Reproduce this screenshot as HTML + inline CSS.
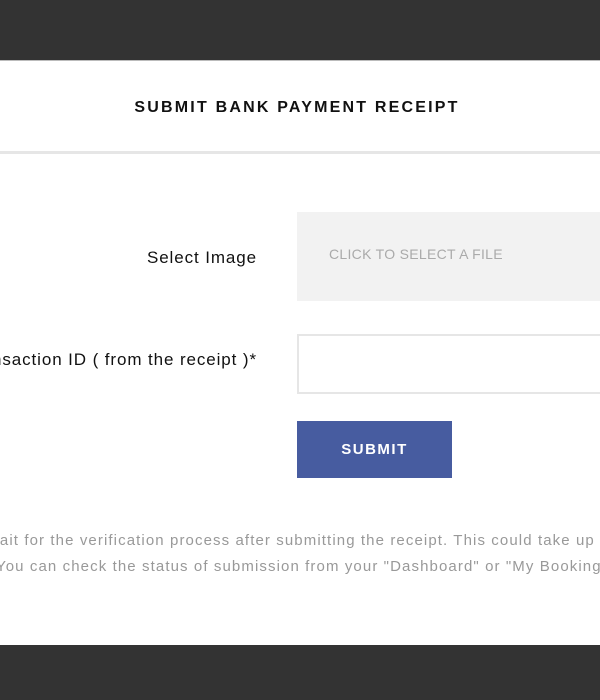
<!DOCTYPE html>
<html><head><style>
html,body{margin:0;padding:0;width:600px;height:700px;overflow:hidden;background:#333;font-family:"Liberation Sans",sans-serif;}
.modal{position:absolute;left:0;top:60px;width:600px;height:584px;background:#fff;border-top:1px solid #bbb;}
.title{position:absolute;top:38px;left:0;width:594px;text-align:center;font-weight:bold;font-size:16px;letter-spacing:2.2px;color:#111;}
.div{position:absolute;top:90px;left:0;width:600px;height:3px;background:#e6e6e6;}
.lbl{position:absolute;right:343px;white-space:nowrap;font-size:17px;letter-spacing:0.9px;color:#111;}
.file{position:absolute;left:297px;top:151px;width:320px;height:89px;background:#f2f2f2;}
.file span{position:absolute;left:32px;top:34px;font-size:14px;color:#aaa;letter-spacing:0.3px;}
.inp{position:absolute;left:297px;top:273px;width:320px;height:56px;border:2px solid #e6e6e6;}
.btn{position:absolute;left:297px;top:360px;width:155px;height:57px;background:#475ca0;color:#fff;font-weight:bold;font-size:15px;letter-spacing:1.5px;text-align:center;line-height:57px;}
.p{position:absolute;white-space:nowrap;font-size:15px;color:#999;letter-spacing:1.1px;}
</style></head><body>
<div class="modal">
<div class="title">SUBMIT BANK PAYMENT RECEIPT</div>
<div class="div"></div>
<div class="lbl" style="top:187px">Select Image</div>
<div class="file"><span>CLICK TO SELECT A FILE</span></div>
<div class="lbl" style="top:289px">Transaction ID ( from the receipt )*</div>
<div class="inp"></div>
<div class="btn">SUBMIT</div>
<div class="p" style="left:-12px;top:471px">wait for the verification process after submitting the receipt. This could take up to</div>
<div class="p" style="left:-4px;top:497px">You can check the status of submission from your "Dashboard" or "My Booking" page.</div>
</div>
</body></html>
